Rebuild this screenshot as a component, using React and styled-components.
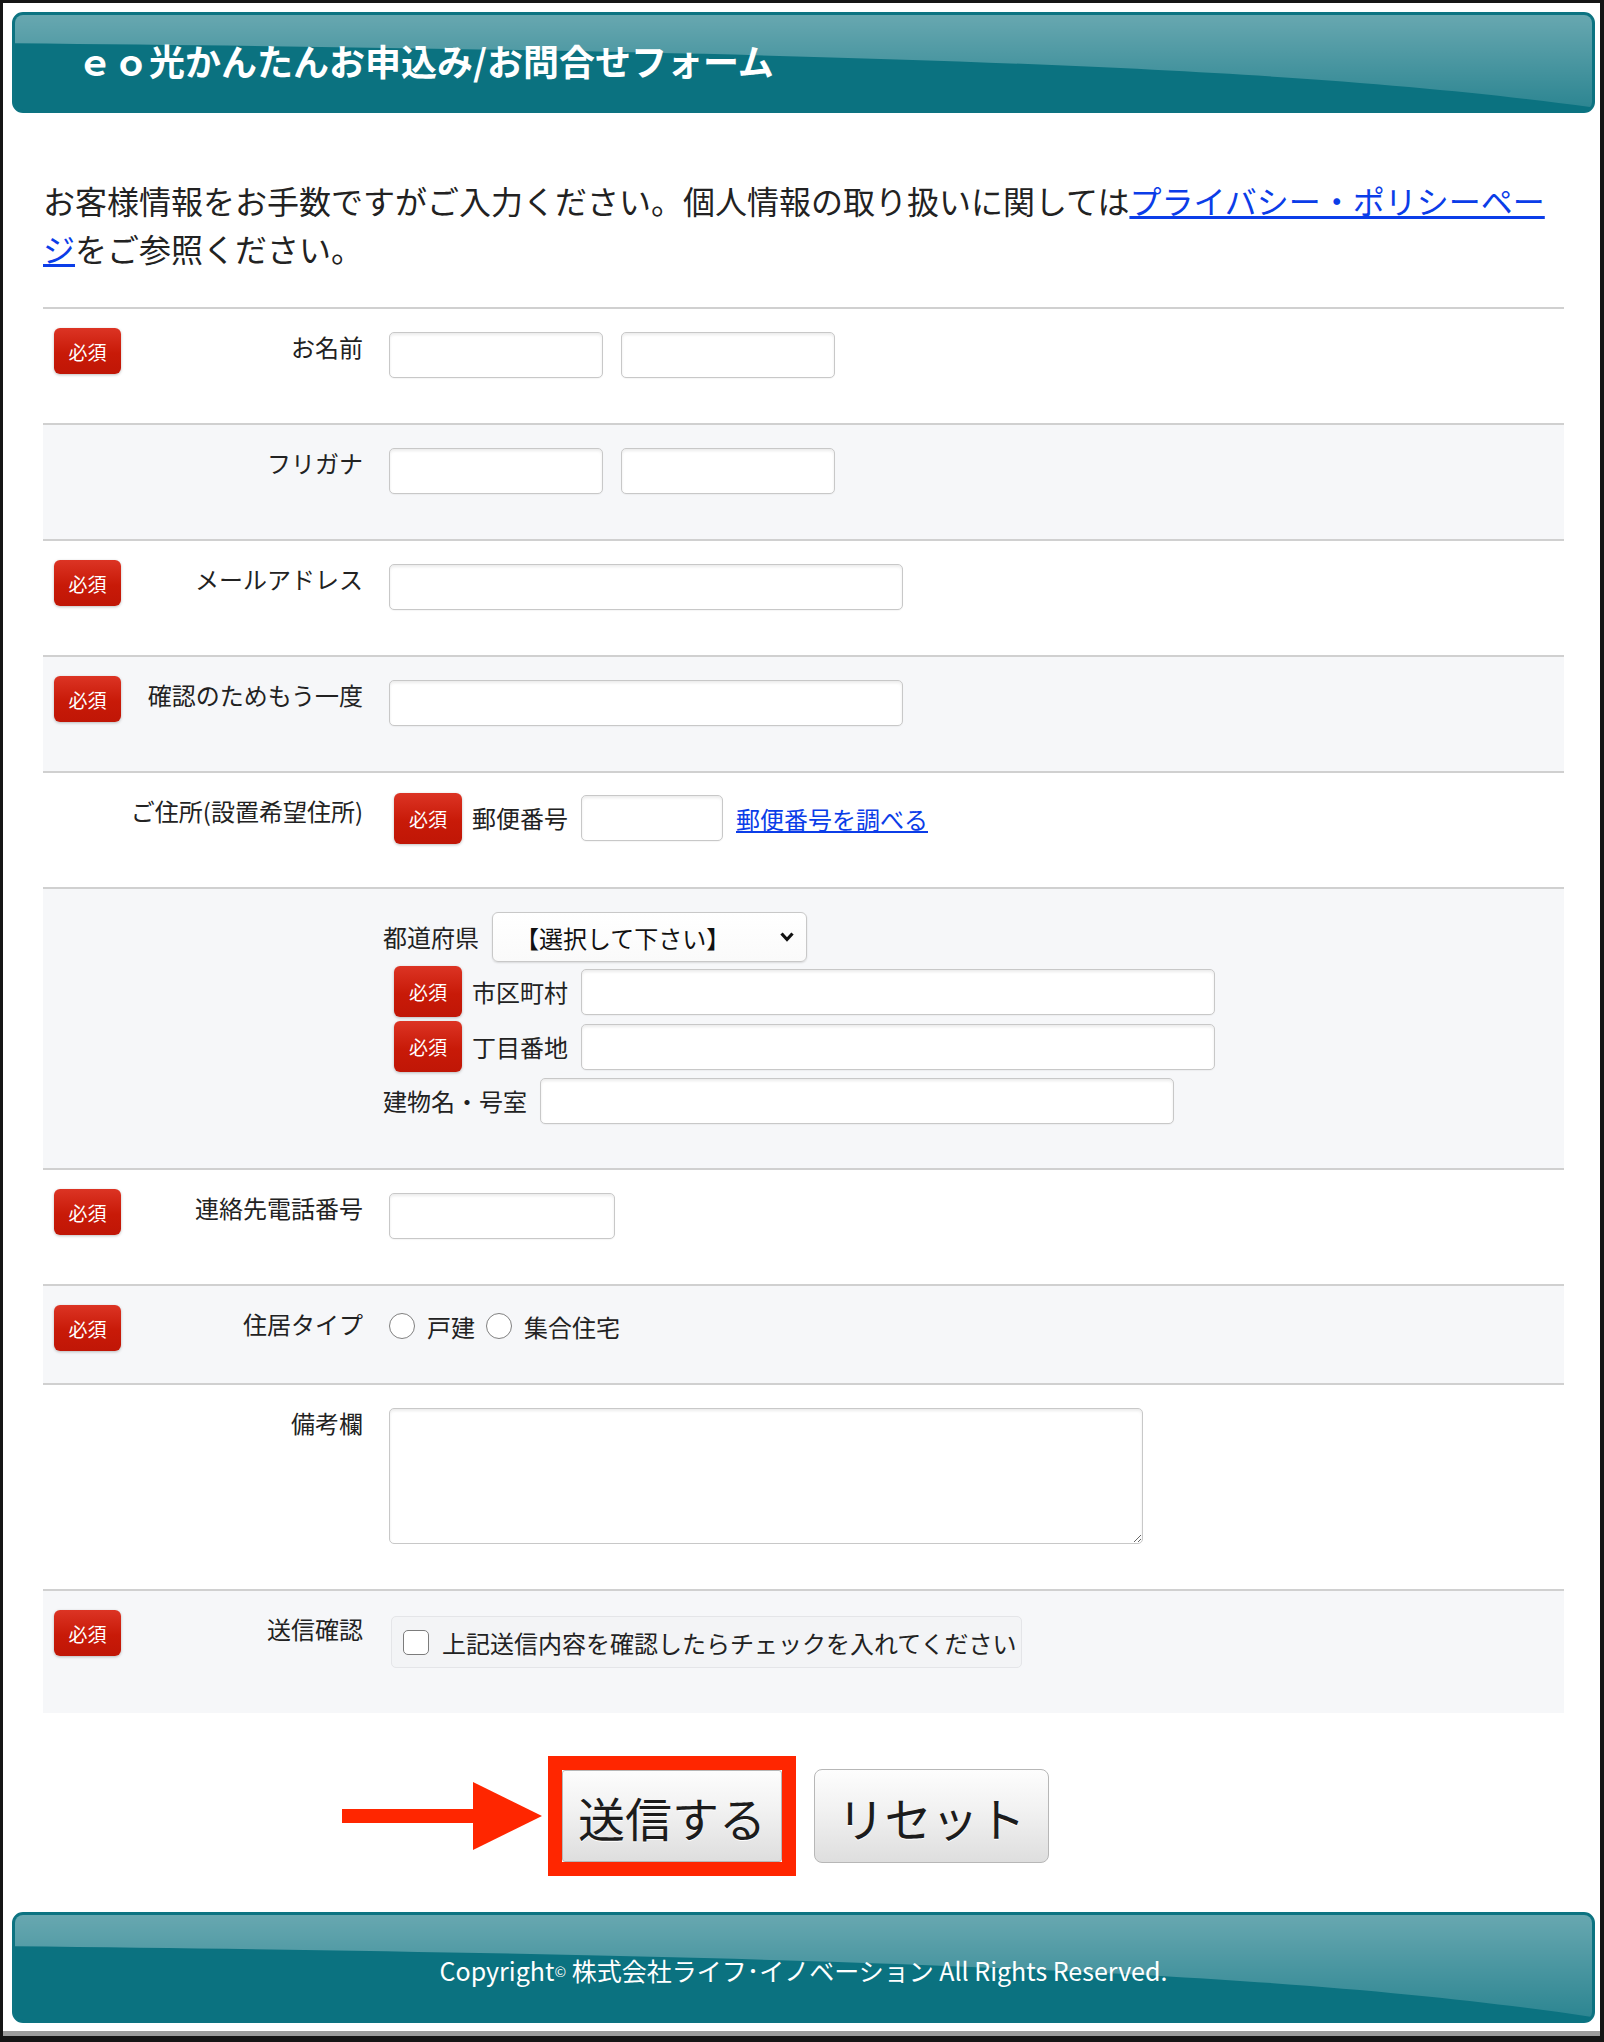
import styled, { createGlobalStyle } from 'styled-components';

const GlobalStyle = createGlobalStyle`
  html, body {
    margin: 0;
    padding: 0;
    background: #151515;
  }
  body {
    font-family: "Noto Sans CJK JP", "Noto Sans", sans-serif;
    color: #222;
  }
`;

const Frame = styled.div`
  margin: 3px 4px 0 3px;
  padding: 9px 5px 8px 9px;
  background: #fff;
  border-bottom: 5px solid #9c9c9c;
`;

const Banner = styled.div`
  position: relative;
  box-sizing: border-box;
  height: ${p => p.$h}px;
  border: 3px solid #0c7381;
  border-radius: 11px;
  background: #0b7280;
  overflow: hidden;
  color: #fff;
  display: flex;
  align-items: center;
  justify-content: ${p => (p.$center ? 'center' : 'flex-start')};
`;

const GlossSvg = styled.svg`
  position: absolute;
  inset: 0;
  width: 100%;
  height: 100%;
  pointer-events: none;
`;

const Title = styled.h1`
  position: relative;
  margin: 0 0 6px 62px;
  font-size: 36px;
  font-weight: 700;
  letter-spacing: 0;
  line-height: 1;
`;

const FooterText = styled.div`
  position: relative;
  margin-top: 5px;
  font-size: 25px;
  line-height: 1;
`;

const Copy = styled.span`
  font-size: 14px;
  vertical-align: 4px;
`;

const Main = styled.div`
  padding: 0 31px;
`;

const Intro = styled.p`
  margin: 63px 0 35px;
  font-size: 32px;
  line-height: 48px;
`;

const Link = styled.a`
  color: #0b3de8;
  text-decoration: underline;
  cursor: pointer;
`;

const Row = styled.div`
  display: grid;
  grid-template-columns: 346px 1fr;
  padding: 19px 0 31px;
  border-top: 2px solid #d0d0d0;
  background: ${p => (p.$alt ? '#f6f7f9' : '#fff')};
`;

const LabelCell = styled.div`
  display: flex;
  align-items: flex-start;
  padding: 0 26px 0 11px;
`;

const Badge = styled.span`
  display: inline-flex;
  align-items: center;
  justify-content: center;
  flex: none;
  width: ${p => (p.$tall ? 68 : 67)}px;
  height: ${p => (p.$tall ? 51 : 46)}px;
  margin: ${p => (p.$tall ? '0 10px 0 11px' : '0')};
  border-radius: 6px;
  background: linear-gradient(#dc3424, #c81a08 55%, #c01606);
  box-shadow: 0 1px 3px rgba(0, 0, 0, 0.25);
  color: #fff;
  font-size: 19px;
  line-height: 1;
`;

const LabelText = styled.span`
  margin: 1px 0 0 auto;
  font-size: 24px;
  line-height: 36px;
  white-space: nowrap;
`;

const Fields = styled.div`
  display: flex;
  align-items: center;
  gap: 18px;
  padding: 4px 0 14px;
`;

const TextInput = styled.input`
  box-sizing: border-box;
  width: ${p => p.$w}px;
  height: 46px;
  margin: 0;
  border: 1px solid #c8c8c8;
  border-radius: 5px;
  background: #fff;
  box-shadow: inset 0 2px 3px rgba(0, 0, 0, 0.08), 0 1px 1px rgba(0, 0, 0, 0.04);
  font-size: 22px;
`;

const TextArea = styled.textarea`
  box-sizing: border-box;
  width: 754px;
  height: 136px;
  margin: 0;
  border: 1px solid #c8c8c8;
  border-radius: 5px;
  background: #fff;
  box-shadow: inset 0 2px 3px rgba(0, 0, 0, 0.08);
`;

const AddressBlock = styled.div`
  display: flex;
  flex-direction: column;
  gap: 4px;
  margin-left: -6px;
  padding: ${p => (p.$top ? p.$top : 0)}px 0 12px;
`;

const AddrLine = styled.div`
  display: flex;
  align-items: center;
  height: ${p => p.$h}px;
`;

const AddrText = styled.span`
  margin-right: 13px;
  font-size: 24px;
  line-height: 1;
  white-space: nowrap;
`;

const LinkText = styled(Link)`
  margin-left: 13px;
  font-size: 24px;
`;

const SelectWrap = styled.div`
  position: relative;
  width: 315px;
  height: 50px;
`;

const Select = styled.select`
  appearance: none;
  box-sizing: border-box;
  width: 100%;
  height: 100%;
  padding: 0 0 0 22px;
  border: 1px solid #c8c8c8;
  border-radius: 6px;
  background: linear-gradient(#fff, #fafafa);
  box-shadow: 0 1px 2px rgba(0, 0, 0, 0.12);
  font-family: inherit;
  font-size: 24px;
  color: #111;
`;

const Chevron = styled.svg`
  position: absolute;
  right: 12px;
  top: 19px;
  width: 16px;
  height: 12px;
  pointer-events: none;
`;

const RadioGroup = styled.div`
  display: flex;
  align-items: center;
  height: 42px;
  padding-bottom: 5px;
  font-size: 24px;
`;

const Radio = styled.input.attrs({ type: 'radio' })`
  appearance: none;
  box-sizing: border-box;
  width: 26px;
  height: 26px;
  margin: 0 12px 0 0;
  border: 1.5px solid #808080;
  border-radius: 50%;
  background: #fff;
`;

const RadioLabel = styled.label`
  display: flex;
  align-items: center;
  margin-right: 11px;
`;

const CheckBox = styled.label`
  box-sizing: border-box;
  display: flex;
  align-items: center;
  width: 631px;
  height: 52px;
  margin: 6px 0 14px 2px;
  padding-left: 11px;
  border: 1px solid #e4e5e8;
  border-radius: 5px;
  background: #f3f4f6;
  font-size: 24px;
  white-space: nowrap;
`;

const Check = styled.input.attrs({ type: 'checkbox' })`
  appearance: none;
  box-sizing: border-box;
  width: 26px;
  height: 25px;
  margin: 0 13px 0 0;
  border: 1.5px solid #7c7c7c;
  border-radius: 5px;
  background: #fff;
`;

const ButtonBar = styled.div`
  display: flex;
  justify-content: center;
  align-items: center;
  gap: 18px;
  padding: 43px 10px 36px 0;
`;

const Highlight = styled.div`
  position: relative;
  border: 14px solid #ff2600;
  line-height: 0;
`;

const Arrow = styled.svg`
  position: absolute;
  right: calc(100% + 20px);
  top: 50%;
  width: 200px;
  height: 68px;
  transform: translateY(-50%);
`;

const Button = styled.button`
  box-sizing: border-box;
  width: ${p => p.$w}px;
  height: ${p => p.$h}px;
  margin: 0;
  padding: 0;
  border: 1px solid #b7b7b7;
  border-radius: ${p => p.$r}px;
  background: linear-gradient(#fdfdfd, #f1f1f1 45%, #dedede);
  color: #1c1c1c;
  font-family: inherit;
  font-size: 47px;
  line-height: 1;
  text-shadow: 0 1px 0 #fff;
`;

const Gloss = ({ id }) => (
  <GlossSvg viewBox="0 0 1583 101" preserveAspectRatio="none">
    <defs>
      <linearGradient id={id} x1="0" y1="0" x2="0" y2="1">
        <stop offset="0" stopColor="#fff" stopOpacity="0.38" />
        <stop offset="1" stopColor="#fff" stopOpacity="0.14" />
      </linearGradient>
    </defs>
    <path d="M0 0H1583V98C1330 62 980 40 0 30Z" fill={`url(#${id})`} />
  </GlossSvg>
);

const NameRow = ({ label, required, alt, widths }) => (
  <Row $alt={alt}>
    <LabelCell>
      {required && <Badge>必須</Badge>}
      <LabelText>{label}</LabelText>
    </LabelCell>
    <Fields>
      {widths.map((w, i) => (
        <TextInput key={i} $w={w} />
      ))}
    </Fields>
  </Row>
);

const App = () => {
  return (
    <>
      <GlobalStyle />
      <Frame>
        <Banner $h={101}>
          <Gloss id="gloss-top" />
          <Title>ｅｏ光かんたんお申込み/お問合せフォーム</Title>
        </Banner>

        <Main>
          <Intro>
            お客様情報をお手数ですがご入力ください。個人情報の取り扱いに関しては
            <Link>プライバシー・ポリシーページ</Link>をご参照ください。
          </Intro>

          <NameRow label="お名前" required widths={[214, 214]} />
          <NameRow label="フリガナ" alt widths={[214, 214]} />
          <NameRow label="メールアドレス" required widths={[514]} />
          <NameRow label="確認のためもう一度" required alt widths={[514]} />

          <Row>
            <LabelCell>
              <LabelText>ご住所(設置希望住所)</LabelText>
            </LabelCell>
            <AddressBlock>
              <AddrLine $h={52}>
                <Badge $tall>必須</Badge>
                <AddrText>郵便番号</AddrText>
                <TextInput $w={142} />
                <LinkText>郵便番号を調べる</LinkText>
              </AddrLine>
            </AddressBlock>
          </Row>

          <Row $alt>
            <LabelCell />
            <AddressBlock $top={4}>
              <AddrLine $h={50}>
                <AddrText>都道府県</AddrText>
                <SelectWrap>
                  <Select defaultValue="">
                    <option value="">【選択して下さい】</option>
                  </Select>
                  <Chevron viewBox="0 0 16 12">
                    <path d="M2.5 2.5L8 8.5L13.5 2.5" fill="none" stroke="#111" strokeWidth="3.2" />
                  </Chevron>
                </SelectWrap>
              </AddrLine>
              <AddrLine $h={51}>
                <Badge $tall>必須</Badge>
                <AddrText>市区町村</AddrText>
                <TextInput $w={634} />
              </AddrLine>
              <AddrLine $h={51}>
                <Badge $tall>必須</Badge>
                <AddrText>丁目番地</AddrText>
                <TextInput $w={634} />
              </AddrLine>
              <AddrLine $h={49}>
                <AddrText>建物名・号室</AddrText>
                <TextInput $w={634} />
              </AddrLine>
            </AddressBlock>
          </Row>

          <NameRow label="連絡先電話番号" required widths={[226]} />

          <Row $alt>
            <LabelCell>
              <Badge>必須</Badge>
              <LabelText>住居タイプ</LabelText>
            </LabelCell>
            <RadioGroup>
              <RadioLabel>
                <Radio name="house" />
                戸建
              </RadioLabel>
              <RadioLabel>
                <Radio name="house" />
                集合住宅
              </RadioLabel>
            </RadioGroup>
          </Row>

          <Row>
            <LabelCell>
              <LabelText>備考欄</LabelText>
            </LabelCell>
            <Fields>
              <TextArea />
            </Fields>
          </Row>

          <Row $alt>
            <LabelCell>
              <Badge>必須</Badge>
              <LabelText>送信確認</LabelText>
            </LabelCell>
            <div>
              <CheckBox>
                <Check />
                上記送信内容を確認したらチェックを入れてください
              </CheckBox>
            </div>
          </Row>

          <ButtonBar>
            <Highlight>
              <Arrow viewBox="0 0 200 68">
                <rect x="0" y="27" width="134" height="14" fill="#ff2600" />
                <path d="M131 0L200 34L131 68Z" fill="#ff2600" />
              </Arrow>
              <Button $w={220} $h={92} $r={3}>送信する</Button>
            </Highlight>
            <Button $w={235} $h={94} $r={8}>リセット</Button>
          </ButtonBar>
        </Main>

        <Banner $h={111} $center>
          <Gloss id="gloss-bottom" />
          <FooterText>
            Copyright<Copy>©</Copy> 株式会社ライフ･イノベーション All Rights Reserved.
          </FooterText>
        </Banner>
      </Frame>
    </>
  );
};

export default App;
